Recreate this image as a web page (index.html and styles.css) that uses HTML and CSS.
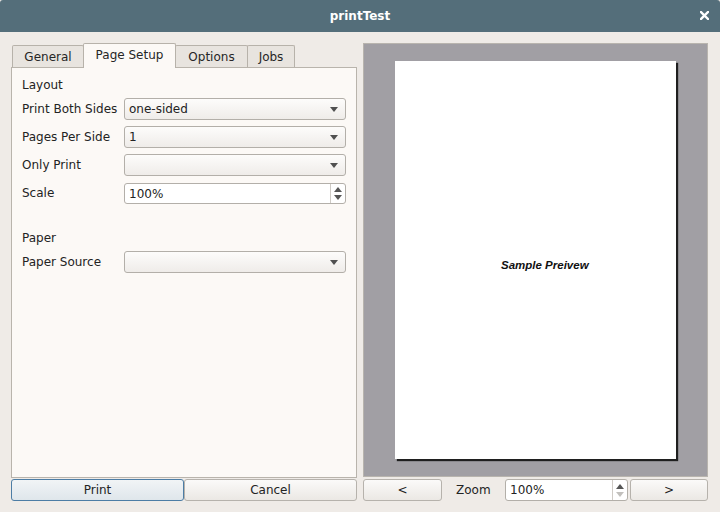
FILE: index.html
```html
<!DOCTYPE html>
<html>
<head>
<meta charset="utf-8">
<link rel="stylesheet" href="styles.css">
</head>
<body>
<div class="window">
  <header class="titlebar">
    <span></span>
    <span class="title">printTest</span>
    <svg class="close" width="9" height="9" viewBox="0 0 9 9"><path d="M1 1 L8 8 M8 1 L1 8" stroke="#fff" stroke-width="2.4" stroke-linecap="square"/></svg>
  </header>
  <div class="main">
    <section class="left">
      <nav class="tabs">
        <div class="tab t-general">General</div>
        <div class="tab t-page active">Page Setup</div>
        <div class="tab t-options">Options</div>
        <div class="tab t-jobs">Jobs</div>
      </nav>
      <div class="panel">
        <div class="heading">Layout</div>
        <div class="form">
          <span class="label">Print Both Sides</span>
          <div class="combo"><span>one-sided</span><i class="arrow"></i></div>
          <span class="label">Pages Per Side</span>
          <div class="combo"><span>1</span><i class="arrow"></i></div>
          <span class="label">Only Print</span>
          <div class="combo"><span></span><i class="arrow"></i></div>
          <span class="label">Scale</span>
          <div class="spin scale-spin"><span class="value">100%</span><span class="spin-btns"><i class="up"></i><i class="down"></i></span></div>
        </div>
        <div class="heading paper">Paper</div>
        <div class="form">
          <span class="label">Paper Source</span>
          <div class="combo"><span></span><i class="arrow"></i></div>
        </div>
      </div>
      <div class="actions">
        <button class="btn primary">Print</button>
        <button class="btn">Cancel</button>
      </div>
    </section>
    <section class="right">
      <div class="preview">
        <div class="page"><span class="sample">Sample Preivew</span></div>
      </div>
      <div class="nav">
        <button class="btn prev">&lt;</button>
        <span class="zoom-label">Zoom</span>
        <div class="spin zoom-spin"><span class="value">100%</span><span class="spin-btns"><i class="up"></i><i class="down off"></i></span></div>
        <button class="btn next">&gt;</button>
      </div>
    </section>
  </div>
</div>
</body>
</html>
```

FILE: styles.css
```css
* { box-sizing: border-box; }
html, body { margin: 0; padding: 0; }
body {
  width: 720px;
  height: 512px;
  overflow: hidden;
  background: #efebe7;
  font-family: "DejaVu Sans", sans-serif;
  font-size: 12px;
  color: #232323;
}
.window { display: flex; flex-direction: column; height: 512px; }
.titlebar {
  height: 32px;
  background: #546e7a;
  display: grid;
  grid-template-columns: 1fr auto 1fr;
  align-items: center;
  padding: 0 11px;
  border-top-left-radius: 3px;
  border-top-right-radius: 3px;
}
.title { color: #fff; font-weight: bold; font-size: 12px; padding-bottom: 1px; }
.close { justify-self: end; margin-top: -1px; }

.main {
  display: flex;
  gap: 6px;
  padding: 11px 12px 0 11px;
}
.left { width: 346px; display: flex; flex-direction: column; }
.right { width: 345px; display: flex; flex-direction: column; }

.tabs { height: 24px; display: flex; align-items: flex-end; padding-left: 1px; position: relative; z-index: 2; }
.tab {
  height: 22px;
  border: 1px solid #b7b2aa;
  border-bottom: none;
  border-radius: 2px 2px 0 0;
  background: #e8e4df;
  display: flex;
  align-items: center;
  justify-content: center;
  padding-top: 1px;
  margin-left: -1px;
  color: #262626;
}
.tab:first-child { margin-left: 0; }
.tab.active {
  height: 25px;
  margin-bottom: -1px;
  background: #fcf9f6;
  padding: 0 0 2px 0;
  position: relative;
  z-index: 3;
}
.t-general { width: 72px; }
.t-page { width: 93px; }
.t-options { width: 73px; }
.t-jobs { width: 48px; }

.panel {
  height: 411px;
  border: 1px solid #b9b4ac;
  background: #fcf9f6;
  padding: 8px 10px 0 10px;
  position: relative;
  z-index: 1;
}
.heading { line-height: 18px; height: 18px; margin-bottom: 4px; }
.heading.paper { margin-top: 25px; }
.form {
  display: grid;
  grid-template-columns: 102px 222px;
  grid-auto-rows: 22px;
  row-gap: 6px;
  align-items: center;
}
.combo {
  height: 22px;
  border: 1px solid #b3afa9;
  border-radius: 3px;
  background: linear-gradient(#fdfcfb, #efece9);
  display: flex;
  align-items: center;
  justify-content: space-between;
  padding: 0 7px 0 4px;
}
.arrow {
  width: 0; height: 0;
  border-left: 4px solid transparent;
  border-right: 4px solid transparent;
  border-top: 5px solid #505050;
}
.spin {
  height: 22px;
  border: 1px solid #b3afa9;
  border-radius: 3px;
  background: #fff;
  display: flex;
  align-items: center;
  justify-content: space-between;
  padding-left: 4px;
}
.scale-spin { height: 21px; align-self: end; }
.spin-btns {
  height: 100%;
  width: 15px;
  border-left: 1px solid #cfcbc6;
  display: flex;
  flex-direction: column;
  align-items: center;
  justify-content: center;
  gap: 3px;
}
.up, .down { width: 0; height: 0; border-left: 4px solid transparent; border-right: 4px solid transparent; }
.up { border-bottom: 5px solid #555; }
.down { border-top: 5px solid #555; }
.down.off { border-top-color: #c2c0bd; }

.actions { display: flex; margin-top: 1px; height: 22px; }
.btn {
  font-family: "DejaVu Sans", sans-serif;
  font-size: 12px;
  color: #232323;
  height: 22px;
  border: 1px solid #b6b2ac;
  border-radius: 3px;
  background: linear-gradient(#fbfaf9, #ebe8e4);
  padding: 0;
  margin: 0;
}
.actions .btn { flex: 1; }
.btn.primary {
  border-color: #4d7da5;
  background: linear-gradient(#f1f4f6, #dfe6eb);
}

.preview {
  height: 434px;
  border: 1px solid #b8b4ae;
  background: #a19fa4;
  display: flex;
  align-items: center;
  justify-content: center;
}
.page {
  width: 281px;
  height: 398px;
  background: #fff;
  box-shadow: 2px 2px 1px #1f1f1f;
  padding: 197px 0 0 106px;
}
.sample {
  font-family: "Liberation Sans", Arial, sans-serif;
  font-weight: bold;
  font-style: italic;
  font-size: 11.5px;
  line-height: 14px;
  color: #111;
  display: block;
}

.nav { display: flex; align-items: center; margin-top: 2px; height: 22px; }
.prev { width: 79px; }
.next { width: 78px; margin-left: 2px; }
.zoom-label { width: 63px; padding-left: 14px; }
.zoom-spin { width: 123px; height: 22px; }
```
